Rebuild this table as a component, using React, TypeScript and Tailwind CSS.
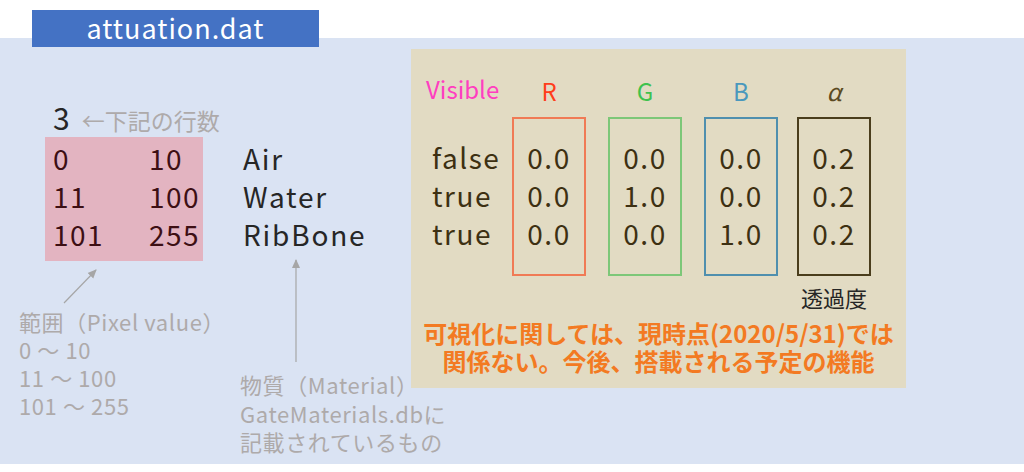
import React from 'react';

const jp = { fontFamily: '"Noto Sans CJK JP", "Noto Sans", sans-serif' };

const ranges = [
  ['0', '10', 'Air'],
  ['11', '100', 'Water'],
  ['101', '255', 'RibBone'],
];

const visible = ['false', 'true', 'true'];

const channels = [
  { label: 'R', labelClass: 'text-[#ff3d1a]', border: 'border-[#f07a55]', values: ['0.0', '0.0', '0.0'] },
  { label: 'G', labelClass: 'text-[#3fc24e]', border: 'border-[#7dc778]', values: ['0.0', '1.0', '0.0'] },
  { label: 'B', labelClass: 'text-[#4a98bd]', border: 'border-[#4f8fae]', values: ['0.0', '0.0', '1.0'] },
];

function ChannelColumn({
  label,
  labelClass,
  border,
  values,
}: {
  label: React.ReactNode;
  labelClass: string;
  border: string;
  values: string[];
}) {
  return (
    <div className="flex w-[74px] flex-col items-center">
      <div className={`h-[68px] pt-[30px] text-[24px] leading-[24px] ${labelClass}`}>{label}</div>
      <div className={`flex h-[159px] w-full flex-col items-center border-2 pt-[19px] ${border}`}>
        {values.map((v, i) => (
          <div key={i} className="text-[28px] leading-[38px] tracking-[1.5px] text-[#3d3012]">
            {v}
          </div>
        ))}
      </div>
    </div>
  );
}

export default function App() {
  return (
    <div className="relative h-[472px] w-[1024px] overflow-hidden bg-white" style={jp}>
      {/* file name tab */}
      <div className="relative z-10 ml-[32px] mt-[10px] flex h-[37px] w-[287px] items-center justify-center bg-[#4472c4] text-[27px] tracking-[1px] text-white">
        attuation.dat
      </div>

      <div className="relative mt-[-9px] flex h-[426px] items-start bg-[#dae3f3]">
        {/* connector arrows */}
        <svg className="pointer-events-none absolute inset-0 h-full w-full" viewBox="0 0 1024 426">
          <defs>
            <marker id="head" markerWidth="10" markerHeight="10" refX="8" refY="5" orient="auto" markerUnits="userSpaceOnUse">
              <path d="M0,1 L9,5 L0,9 Z" fill="#a6a6a6" />
            </marker>
          </defs>
          <line x1="64" y1="265" x2="96" y2="232" stroke="#a6a6a6" strokeWidth="1.2" markerEnd="url(#head)" />
          <line x1="296" y1="324" x2="296" y2="222" stroke="#a6a6a6" strokeWidth="1.2" markerEnd="url(#head)" />
        </svg>

        {/* left side */}
        <div className="flex w-[411px] shrink-0 flex-col pt-[61px]">
          <div className="flex h-[36px] items-baseline pl-[53px] leading-[36px]">
            <span className="text-[30px] text-[#262626]">3</span>
            <span className="ml-[12px] text-[23px] text-[#aeaaaa]">←下記の行数</span>
          </div>

          <div className="mt-[2px] flex items-start pl-[45px]">
            <div className="h-[124px] w-[158px] bg-[#e3b4c1] pl-[8px] pt-[2px] text-[28px] leading-[38px] tracking-[1.5px] text-[#3d0f14]">
              {ranges.map(([a, b]) => (
                <div key={a} className="flex">
                  <span className="w-[96px]">{a}</span>
                  <span>{b}</span>
                </div>
              ))}
            </div>
            <div className="ml-[40px] pt-[2px] text-[28px] leading-[38px] tracking-[1.8px] text-[#262626]">
              {ranges.map(([, , m]) => (
                <div key={m}>{m}</div>
              ))}
            </div>
          </div>

          <div className="flex items-start whitespace-nowrap text-[22px] leading-[28px] tracking-[0.6px] text-[#aeaaaa]">
            <div className="ml-[19px] mt-[46px] w-[221px] shrink-0">
              <div>範囲（Pixel value）</div>
              <div>0 〜 10</div>
              <div>11 〜 100</div>
              <div>101 〜 255</div>
            </div>
            <div className="mt-[109px] shrink-0 leading-[28.5px]">
              <div>物質（Material）</div>
              <div>GateMaterials.dbに</div>
              <div>記載されているもの</div>
            </div>
          </div>
        </div>

        {/* colour table panel */}
        <div className="mt-[11px] flex h-[339px] w-[495px] flex-col bg-[#e2dbc3]">
          <div className="flex pl-[15px]">
            <div className="w-[86px]">
              <div className="h-[68px] pt-[28px] text-[24px] leading-[24px] text-[#ff3ec0]">Visible</div>
              <div className="pl-[6px] pt-[21px] text-[28px] leading-[38px] tracking-[1.5px] text-[#3d3012]">
                {visible.map((v, i) => (
                  <div key={i}>{v}</div>
                ))}
              </div>
            </div>
            <div className="flex gap-[22px]">
              {channels.map((c) => (
                <ChannelColumn key={c.label} {...c} />
              ))}
              <div className="ml-[-3px] flex flex-col items-center">
                <ChannelColumn
                  label={<span className="italic">α</span>}
                  labelClass="text-[#5b4a22]"
                  border="border-[#4a3d1c]"
                  values={['0.2', '0.2', '0.2']}
                />
                <div className="mt-[10px] text-[22px] leading-[22px] text-[#262626]">透過度</div>
              </div>
            </div>
          </div>
          <div className="mt-[11px] text-center text-[24px] font-bold leading-[28px] text-[#f37a22]">
            <div>可視化に関しては、現時点(2020/5/31)では</div>
            <div>関係ない。今後、搭載される予定の機能</div>
          </div>
        </div>
      </div>
    </div>
  );
}
